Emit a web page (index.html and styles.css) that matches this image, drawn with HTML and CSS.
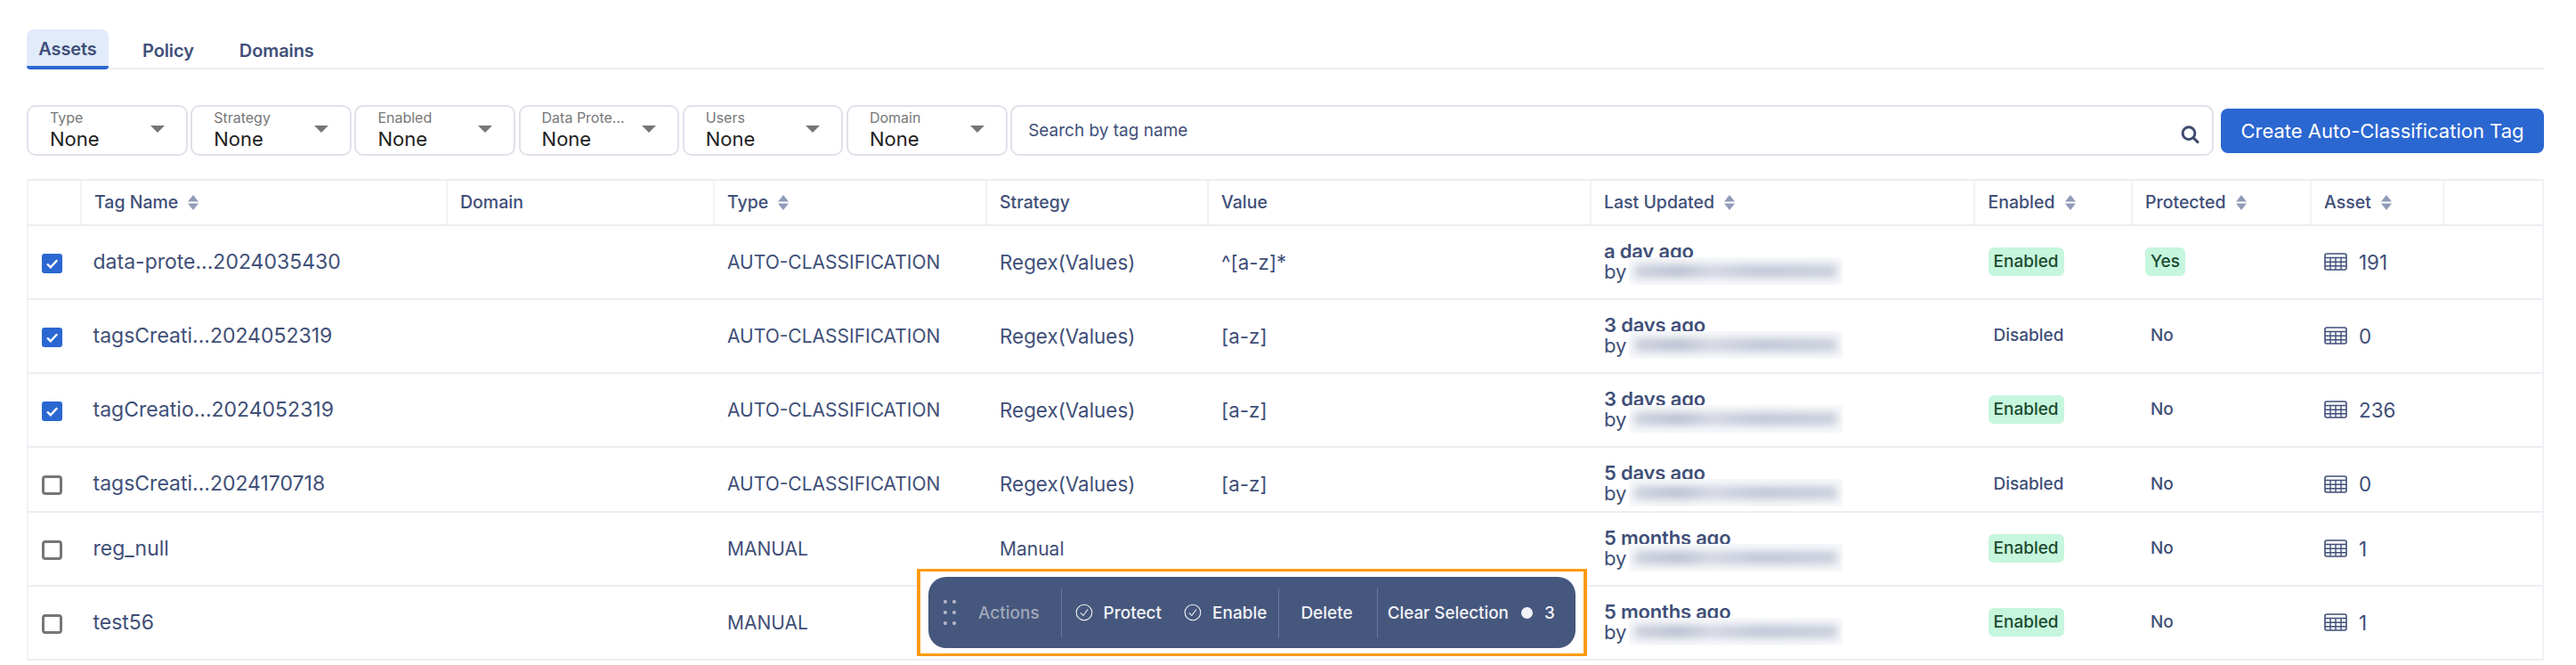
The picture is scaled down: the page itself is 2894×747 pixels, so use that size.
FILE: index.html
```html
<!DOCTYPE html>
<html lang="en">
<head>
<meta charset="utf-8">
<title>Auto-Classification Tags</title>
<link rel="stylesheet" href="styles.css">
</head>
<body>
<svg class="defs" width="0" height="0" aria-hidden="true">
  <defs>
    <symbol id="sort" viewBox="0 0 12 17"><path d="M6 0l6 7.5H0zM0 9.5h12L6 17z"/></symbol>
    <symbol id="caret" viewBox="0 0 16 8"><path d="M0 0h16L8 8z"/></symbol>
    <symbol id="tbl" viewBox="0 0 26 20"><rect x="1" y="1" width="24" height="18" rx="2" fill="none" stroke="currentColor" stroke-width="1.6"/><path d="M1 5.5h24M1 10.2h24M1 14.8h24M7 5.5V19M13 5.5V19M19 5.5V19" fill="none" stroke="currentColor" stroke-width="1.4"/></symbol>
    <symbol id="tick" viewBox="0 0 20 20"><circle cx="10" cy="10" r="8.8" fill="none" stroke="currentColor" stroke-width="1.1"/><path d="M6 10.3l2.9 3.2 5.2-7" fill="none" stroke="currentColor" stroke-width="1.1"/></symbol>
    <symbol id="cb" viewBox="0 0 23 22"><rect width="23" height="22" rx="3" fill="#2b67d1"/><path d="M6 11.5l3.8 3.7 7.4-8" fill="none" stroke="#fff" stroke-width="2.4"/></symbol>
  </defs>
</svg>
<main class="page">
  <nav class="tabs">
    <a class="tab active">Assets</a>
    <a class="tab">Policy</a>
    <a class="tab">Domains</a>
  </nav>

  <section class="filters">
    <div class="filter"><div class="ftext"><span class="flabel">Type</span><span class="fvalue">None</span></div><svg class="caret"><use href="#caret"/></svg></div>
    <div class="filter"><div class="ftext"><span class="flabel">Strategy</span><span class="fvalue">None</span></div><svg class="caret"><use href="#caret"/></svg></div>
    <div class="filter"><div class="ftext"><span class="flabel">Enabled</span><span class="fvalue">None</span></div><svg class="caret"><use href="#caret"/></svg></div>
    <div class="filter"><div class="ftext"><span class="flabel">Data Prote...</span><span class="fvalue">None</span></div><svg class="caret"><use href="#caret"/></svg></div>
    <div class="filter"><div class="ftext"><span class="flabel">Users</span><span class="fvalue">None</span></div><svg class="caret"><use href="#caret"/></svg></div>
    <div class="filter"><div class="ftext"><span class="flabel">Domain</span><span class="fvalue">None</span></div><svg class="caret"><use href="#caret"/></svg></div>
    <div class="search">
      <span>Search by tag name</span>
      <svg class="search-icon" viewBox="0 0 21 20"><circle cx="9" cy="8.6" r="6.9" fill="none" stroke="currentColor" stroke-width="3"/><path d="M14 13.6l5 5" fill="none" stroke="currentColor" stroke-width="3" stroke-linecap="round"/></svg>
    </div>
    <button class="create">Create Auto-Classification Tag</button>
  </section>

  <section class="table">
    <div class="row head">
      <div class="c"></div>
      <div class="c">Tag Name<svg class="sort"><use href="#sort"/></svg></div>
      <div class="c">Domain</div>
      <div class="c">Type<svg class="sort"><use href="#sort"/></svg></div>
      <div class="c">Strategy</div>
      <div class="c">Value</div>
      <div class="c">Last Updated<svg class="sort"><use href="#sort"/></svg></div>
      <div class="c">Enabled<svg class="sort"><use href="#sort"/></svg></div>
      <div class="c">Protected<svg class="sort"><use href="#sort"/></svg></div>
      <div class="c">Asset<svg class="sort"><use href="#sort"/></svg></div>
      <div class="c"></div>
    </div>

    <div class="row">
      <div class="c chk"><svg class="box"><use href="#cb"/></svg></div>
      <div class="c name">data-prote...2024035430</div><div class="c"></div>
      <div class="c">AUTO-CLASSIFICATION</div><div class="c wide">Regex(Values)</div><div class="c wide">^[a-z]*</div>
      <div class="c upd"><b>a day ago</b><span class="by">by<i class="mask"></i></span></div>
      <div class="c"><span class="pill">Enabled</span></div><div class="c"><span class="pill">Yes</span></div>
      <div class="c wide"><svg class="tbl"><use href="#tbl"/></svg>191</div><div class="c"></div>
    </div>
    <div class="row">
      <div class="c chk"><svg class="box"><use href="#cb"/></svg></div>
      <div class="c name">tagsCreati...2024052319</div><div class="c"></div>
      <div class="c">AUTO-CLASSIFICATION</div><div class="c wide">Regex(Values)</div><div class="c wide">[a-z]</div>
      <div class="c upd"><b>3 days ago</b><span class="by">by<i class="mask"></i></span></div>
      <div class="c"><span class="plain">Disabled</span></div><div class="c"><span class="plain">No</span></div>
      <div class="c wide"><svg class="tbl"><use href="#tbl"/></svg>0</div><div class="c"></div>
    </div>
    <div class="row">
      <div class="c chk"><svg class="box"><use href="#cb"/></svg></div>
      <div class="c name">tagCreatio...2024052319</div><div class="c"></div>
      <div class="c">AUTO-CLASSIFICATION</div><div class="c wide">Regex(Values)</div><div class="c wide">[a-z]</div>
      <div class="c upd"><b>3 days ago</b><span class="by">by<i class="mask"></i></span></div>
      <div class="c"><span class="pill">Enabled</span></div><div class="c"><span class="plain">No</span></div>
      <div class="c wide"><svg class="tbl"><use href="#tbl"/></svg>236</div><div class="c"></div>
    </div>
    <div class="row short">
      <div class="c chk"><span class="box empty"></span></div>
      <div class="c name">tagsCreati...2024170718</div><div class="c"></div>
      <div class="c">AUTO-CLASSIFICATION</div><div class="c wide">Regex(Values)</div><div class="c wide">[a-z]</div>
      <div class="c upd"><b>5 days ago</b><span class="by">by<i class="mask"></i></span></div>
      <div class="c"><span class="plain">Disabled</span></div><div class="c"><span class="plain">No</span></div>
      <div class="c wide"><svg class="tbl"><use href="#tbl"/></svg>0</div><div class="c"></div>
    </div>
    <div class="row">
      <div class="c chk"><span class="box empty"></span></div>
      <div class="c name">reg_null</div><div class="c"></div>
      <div class="c">MANUAL</div><div class="c">Manual</div><div class="c"></div>
      <div class="c upd"><b>5 months ago</b><span class="by">by<i class="mask"></i></span></div>
      <div class="c"><span class="pill">Enabled</span></div><div class="c"><span class="plain">No</span></div>
      <div class="c wide"><svg class="tbl"><use href="#tbl"/></svg>1</div><div class="c"></div>
    </div>
    <div class="row">
      <div class="c chk"><span class="box empty"></span></div>
      <div class="c name">test56</div><div class="c"></div>
      <div class="c">MANUAL</div><div class="c"></div><div class="c"></div>
      <div class="c upd"><b>5 months ago</b><span class="by">by<i class="mask"></i></span></div>
      <div class="c"><span class="pill">Enabled</span></div><div class="c"><span class="plain">No</span></div>
      <div class="c wide"><svg class="tbl"><use href="#tbl"/></svg>1</div><div class="c"></div>
    </div>
  </section>
</main>

<div class="highlight">
  <div class="toolbar">
    <svg class="grip" viewBox="0 0 14 28"><g fill="#b0b5c2"><circle cx="2" cy="2" r="2.1"/><circle cx="12" cy="2" r="2.1"/><circle cx="2" cy="14" r="2.1"/><circle cx="12" cy="14" r="2.1"/><circle cx="2" cy="26" r="2.1"/><circle cx="12" cy="26" r="2.1"/></g></svg>
    <span class="t-actions">Actions</span>
    <span class="t-div"></span>
    <span class="t-item first"><svg class="tick"><use href="#tick"/></svg>Protect</span>
    <span class="t-item second"><svg class="tick"><use href="#tick"/></svg>Enable</span>
    <span class="t-div"></span>
    <span class="t-item del">Delete</span>
    <span class="t-div"></span>
    <span class="t-item clear">Clear Selection<i class="t-dot"></i>3</span>
  </div>
</div>
</body>
</html>
```

FILE: styles.css
```css
* { box-sizing: border-box; }
html, body { margin: 0; height: 747px; overflow: hidden; background: #fff; }
body { position: relative; font-family: Inter, "Noto Sans", sans-serif; color: #3f4f78; }
.defs { position: absolute; }

.page { width: 2894px; padding: 33px 36px 0 30px; }

.tabs { display: flex; height: 45px; border-bottom: 2px solid #eceef2; }
.tab { height: 45px; padding: 3px 0 0; display: flex; align-items: center; font-size: 20px; font-weight: 600; letter-spacing: -0.1px; margin-left: 51px; }
.tab.active { width: 92px; margin-left: 0; justify-content: center; background: #e2ebfa; border-radius: 8px 8px 4px 4px; border-bottom: 4px solid #2b67d1; padding: 2px 0 0; }
.tab.active + .tab { margin-left: 38px; }

.filters { display: flex; margin-top: 40px; height: 57px; gap: 3.5px; }
.filter { width: 180.7px; border: 2px solid #dfe2ea; border-radius: 10px; padding: 0 24px; display: flex; align-items: center; justify-content: space-between; }
.ftext { display: flex; flex-direction: column; }
.flabel { font-size: 16px; line-height: 20px; color: #777; margin-top: -3px; }
.fvalue { font-size: 22px; line-height: 26px; color: #222; margin-top: 1px; }
.caret { width: 16px; height: 8px; fill: #767676; margin-bottom: 4px; }

.search { flex: 1; border: 2px solid #dfe2ea; border-radius: 10px; padding: 0 14px 0 18px; display: flex; align-items: center; justify-content: space-between; font-size: 19px; }
.search-icon { width: 21px; height: 20px; color: #3f4b6e; margin-top: 9px; }
.create { width: 363px; height: 50px; margin: 4px 0 0 4.5px; border: 0; border-radius: 8px; background: #2b67d1; color: #fff; font: 400 22px Inter, sans-serif; padding: 0; }

.table { margin-top: 26px; border-left: 2px solid #f1f2f8; border-right: 2px solid #f1f2f8; border-top: 2px solid #eceef2; width: 2828px; }
.row { display: grid; grid-template-columns: 57.5px 411px 300px 306px 249px 430px 431.5px 176.5px 201px 149px 1fr; height: 83px; border-bottom: 2px solid #eceef2; font-size: 21px; }
.row.short { height: 73px; padding-top: 11px; }
.row.head { height: 51px; font-size: 19.5px; font-weight: 500; }
.c { display: flex; align-items: center; padding-left: 16.5px; padding-bottom: 1px; min-width: 0; }
.c.name { font-size: 23px; padding-left: 15px; padding-bottom: 2px; }
.c.wide { font-size: 22.4px; }
.head .c { border-left: 2px solid #f1f2f4; padding-left: 14.5px; padding-bottom: 1px; }
.head .c:first-child { border-left: 0; }
.sort { width: 12px; height: 17px; fill: #8f9bb8; margin-left: 11px; }

.chk { padding-left: 15px; padding-top: 2px; padding-bottom: 0; }
.box { width: 23px; height: 22px; display: block; }
.box.empty { border: 3px solid #767676; border-radius: 4px; }

.upd { flex-direction: column; align-items: flex-start; justify-content: center; line-height: 23px; padding-bottom: 2px; font-size: 22px; }
.upd b { font-weight: 600; font-size: 22px; letter-spacing: -0.2px; }
.by { position: relative; display: block; }
.mask { position: absolute; left: 28px; top: -5px; width: 240px; height: 31px; background: #f8f9fb; overflow: hidden; }
.mask::before { content: ""; position: absolute; inset: 8px 6px; background: linear-gradient(90deg, #cdd1dd, #bac0d1 22%, #d2d6e1 38%, #c0c6d6 62%, #c9cedb); filter: blur(5px); }

.pill { height: 32px; padding: 0 6px; display: flex; align-items: center; background: #c6f6dd; color: #1c4a2e; border-radius: 6px; font-size: 19px; font-weight: 500; margin-top: -1px; }
.plain { padding-left: 6px; font-size: 19px; font-weight: 500; margin-top: -1px; }
.tbl { width: 26px; height: 20px; margin-right: 13px; color: #3f4f78; }

.highlight { position: absolute; left: 1030px; top: 639px; width: 753px; height: 98px; border: 3px solid #ff9a0f; border-left-width: 4px; border-right-width: 4px; background: #fff; padding: 6px 8px 6px 9px; }
.toolbar { height: 80px; width: 727px; background: #46577e; border-radius: 20px; display: flex; align-items: center; color: #fff; font-size: 19px; font-weight: 500; padding-left: 17px; }
.grip { width: 14px; height: 28px; flex: none; }
.t-actions { color: #a0a7b8; margin-left: 25px; width: 92.5px; }
.t-div { width: 1px; height: 55px; background: #6b7a9b; flex: none; }
.t-item { display: flex; align-items: center; white-space: nowrap; color: #f2f3f6; }
.t-item.first { margin-left: 15px; }
.t-item.second { margin-left: 25px; margin-right: 13px; }
.t-item.del { margin: 0 27px 0 24px; }
.t-item.clear { margin-left: 11px; font-size: 18.8px; }
.tick { width: 20px; height: 20px; margin-right: 12px; flex: none; }
.t-dot { width: 13px; height: 13px; border-radius: 50%; background: #f2f3f6; margin: 0 13px 0 14px; }
```
